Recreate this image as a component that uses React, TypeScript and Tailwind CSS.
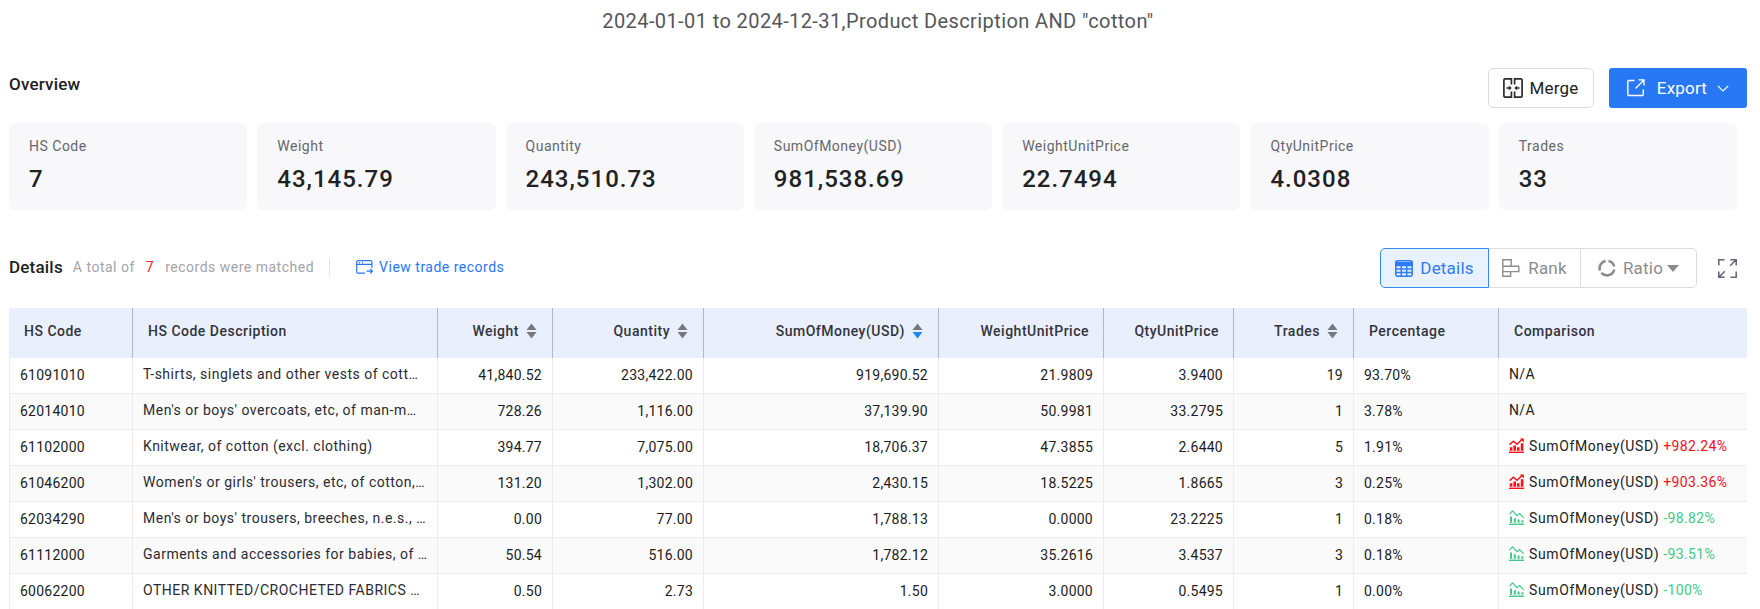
import React from "react";

const STATS = [
  { label: "HS Code", value: "7" },
  { label: "Weight", value: "43,145.79" },
  { label: "Quantity", value: "243,510.73" },
  { label: "SumOfMoney(USD)", value: "981,538.69" },
  { label: "WeightUnitPrice", value: "22.7494" },
  { label: "QtyUnitPrice", value: "4.0308" },
  { label: "Trades", value: "33" },
];

const ROWS = [
  { code: "61091010", desc: "T-shirts, singlets and other vests of cott…", weight: "41,840.52", qty: "233,422.00", sum: "919,690.52", wup: "21.9809", qup: "3.9400", trades: "19", pct: "93.70%", change: "" },
  { code: "62014010", desc: "Men's or boys' overcoats, etc, of man-m…", weight: "728.26", qty: "1,116.00", sum: "37,139.90", wup: "50.9981", qup: "33.2795", trades: "1", pct: "3.78%", change: "" },
  { code: "61102000", desc: "Knitwear, of cotton (excl. clothing)", weight: "394.77", qty: "7,075.00", sum: "18,706.37", wup: "47.3855", qup: "2.6440", trades: "5", pct: "1.91%", change: "+982.24%" },
  { code: "61046200", desc: "Women's or girls' trousers, etc, of cotton,…", weight: "131.20", qty: "1,302.00", sum: "2,430.15", wup: "18.5225", qup: "1.8665", trades: "3", pct: "0.25%", change: "+903.36%" },
  { code: "62034290", desc: "Men's or boys' trousers, breeches, n.e.s., …", weight: "0.00", qty: "77.00", sum: "1,788.13", wup: "0.0000", qup: "23.2225", trades: "1", pct: "0.18%", change: "-98.82%" },
  { code: "61112000", desc: "Garments and accessories for babies, of …", weight: "50.54", qty: "516.00", sum: "1,782.12", wup: "35.2616", qup: "3.4537", trades: "3", pct: "0.18%", change: "-93.51%" },
  { code: "60062200", desc: "OTHER KNITTED/CROCHETED FABRICS …", weight: "0.50", qty: "2.73", sum: "1.50", wup: "3.0000", qup: "0.5495", trades: "1", pct: "0.00%", change: "-100%" },
];

function SortIcon({ active }: { active?: boolean }) {
  return (
    <svg width="11" height="16" viewBox="0 0 11 16" className="shrink-0">
      <path d="M5.5 0.5L10.5 7H0.5Z" fill="#77787f" />
      <path d="M5.5 15.5L10.5 9H0.5Z" fill={active ? "#1e88f5" : "#77787f"} />
    </svg>
  );
}

function MergeIcon() {
  return (
    <svg width="20" height="20" viewBox="0 0 20 20" fill="none" stroke="#2b2c32" strokeWidth="1.7">
      <path d="M8.4 6.5V.9H2.1A1.2 1.2 0 0 0 .9 2.1v15.8a1.2 1.2 0 0 0 1.2 1.2h6.3v-5.6" />
      <path d="M11.6 6.5V.9h6.3a1.2 1.2 0 0 1 1.2 1.2v15.8a1.2 1.2 0 0 1-1.2 1.2h-6.3v-5.6" />
      <path d="M3.4 10h3.2M16.6 10h-3.2" strokeWidth="1.4" />
      <path d="M5.8 7.4L8.8 10L5.8 12.6ZM14.2 7.4L11.2 10L14.2 12.6Z" fill="#2b2c32" stroke="none" />
    </svg>
  );
}

function ExportIcon() {
  return (
    <svg width="18" height="18" viewBox="0 0 18 18" fill="none" stroke="#fff" strokeWidth="1.4">
      <path d="M7.5 1.5H2A1.2 1.2 0 0 0 .8 2.7v12.6A1.2 1.2 0 0 0 2 16.5h13.1a1.2 1.2 0 0 0 1.2-1.2V10.5" />
      <path d="M11.5.9h5.5v5.5M17 .9L8.5 9.4" />
    </svg>
  );
}

function TradeIcon() {
  return (
    <svg width="17" height="14" viewBox="0 0 17 14" fill="none" stroke="#2878f6" strokeWidth="1.2" className="shrink-0">
      <path d="M9 13.2H2A1.3 1.3 0 0 1 .7 12V2A1.3 1.3 0 0 1 2 .7h12.6A1.3 1.3 0 0 1 15.9 2v6" />
      <path d="M.7 4.4h15.2M3 2.6h1M6 2.6h1" />
      <path d="M10.5 11.2h5.8M14.2 9l2.2 2.2-2.2 2.2" />
    </svg>
  );
}

function TableIcon() {
  return (
    <svg width="18" height="17" viewBox="0 0 18 17" fill="none" stroke="#2e7bf6" strokeWidth="1.5">
      <rect x=".8" y=".8" width="16.4" height="15.4" rx="2" />
      <path d="M.8 2.8h16.4V5.4H.8Z" fill="#2e7bf6" />
      <path d="M.8 9h16.4M.8 12.6h16.4M6.3 5v11M11.7 5v11" />
    </svg>
  );
}

function RankIcon() {
  return (
    <svg width="18" height="18" viewBox="0 0 18 18" fill="none" stroke="#8c8c8c" strokeWidth="1.4">
      <path d="M.8.8h8.4v6.4H.8ZM.8 7.2h16v5.4H.8ZM.8 12.6h7.8v4.6H.8Z" />
    </svg>
  );
}

function RatioIcon() {
  return (
    <svg width="18" height="18" viewBox="0 0 18 18" fill="none" stroke="#8c8c8c" strokeWidth="2.6">
      <path d="M10.5 1.9A7.4 7.4 0 0 1 16.2 7.6" />
      <path d="M16.2 10.4A7.4 7.4 0 0 1 3.4 13.8" />
      <path d="M2 11.5A7.4 7.4 0 0 1 7.6 1.9" />
    </svg>
  );
}

function FullscreenIcon() {
  return (
    <svg width="19" height="19" viewBox="0 0 19 19" fill="none" stroke="#62627a" strokeWidth="1.5">
      <path d="M.8 6.5V.8h5.7M12.5.8h5.7v5.7M18.2.8l-6 6M.8 12.5v5.7h5.7M.8 18.2l6-6M18.2 12.5v5.7h-5.7" />
    </svg>
  );
}

function TrendIcon({ up }: { up: boolean }) {
  const color = up ? "#f5101a" : "#42c98a";
  return (
    <svg width="15" height="15" viewBox="0 0 15 15" fill="none" className="shrink-0">
      <path d="M0 14.3h15" stroke={color} strokeWidth="1.4" />
      {up ? (
        <>
          <path d="M.8 12.8V9.2h2.6v3.6ZM4.4 12.8V7.6h2.6v5.2ZM8 12.8V9.2h2.6v3.6ZM11.8 12.8V5.2h2.6v7.6Z" fill={color} />
          <path d="M.5 6.6L4.5 3.2L8 6.2L13 1.6" stroke={color} strokeWidth="1.4" />
          <path d="M10.8 .4h4v4Z" fill={color} />
        </>
      ) : (
        <>
          <path d="M1 12.8V6.6h2v6.2ZM4.8 12.8V8.2h2v4.6ZM8.6 12.8V9.4h2v3.4ZM12.4 12.8V10.2h2v2.6Z" fill={color} />
          <path d="M.5 4.2L3.5 .9L8 5.6L10.5 3.6L14.6 7.6" stroke={color} strokeWidth="1.2" />
        </>
      )}
    </svg>
  );
}

function HeadCell({
  label,
  width,
  sort,
  active,
  right,
  pad,
}: {
  label: string;
  width: string;
  sort?: boolean;
  active?: boolean;
  right?: boolean;
  pad: string;
}) {
  return (
    <th className={`${width} ${pad} h-[50px] border-l border-[#b3b6c9] first:border-l-0 bg-[#e9effd] pb-1 font-medium text-[#33343c] whitespace-nowrap`}>
      <div className={`flex items-center gap-[7px] ${right ? "justify-end" : "justify-start"}`}>
        {label}
        {sort && <SortIcon active={active} />}
      </div>
    </th>
  );
}

function Comparison({ change }: { change: string }) {
  if (!change) return <span className="text-[#222]">N/A</span>;
  const up = change.startsWith("+");
  return (
    <div className="flex items-center whitespace-nowrap">
      <TrendIcon up={up} />
      <span className="ml-[5px] tracking-[0.62px] text-[#222]">SumOfMoney(USD)</span>
      <span className={`ml-1 ${up ? "text-[#f5101a]" : "text-[#42c98a]"}`}>{change}</span>
    </div>
  );
}

export default function App() {
  return (
    <div className="h-[609px] w-[1760px] overflow-hidden bg-white pl-[9px] pr-[13px] font-['Roboto',sans-serif] text-sm tracking-[0.5px] text-[#222]">
      <h1 className="flex h-[42px] items-center justify-center text-xl font-normal tracking-[0.4px] text-[#55565c]">
        2024-01-01 to 2024-12-31,Product Description AND "cotton"
      </h1>

      <div className="mt-[26px] flex h-10 items-center justify-between">
        <h2 className="-mt-[8px] text-[17px] font-medium tracking-[0.2px] text-[#222]">Overview</h2>
        <div className="flex gap-[15px] text-[17px] tracking-[0.2px]">
          <button className="flex h-10 w-[106px] items-center justify-center gap-[6px] rounded-[5px] border border-[#dcdcdc] bg-white text-[#222]">
            <MergeIcon />
            Merge
          </button>
          <button className="flex h-10 w-[138px] items-center justify-center rounded-[3px] bg-[#2878f6] text-white">
            <ExportIcon />
            <span className="ml-3">Export</span>
            <svg width="12" height="7" viewBox="0 0 12 7" fill="none" stroke="#fff" strokeWidth="1.2" className="ml-[10px]">
              <path d="M.8.8L6 6L11.2.8" />
            </svg>
          </button>
        </div>
      </div>

      <div className="mt-[15px] mr-[10px] grid grid-cols-7 gap-[10px]">
        {STATS.map((s) => (
          <div key={s.label} className="h-[87px] rounded-md bg-[#f8f8fa] pl-5 pt-[14px]">
            <div className="leading-[18px] text-[#66676c]">{s.label}</div>
            <div className="mt-3 text-2xl leading-6 font-medium tracking-[1px] text-[#222]">{s.value}</div>
          </div>
        ))}
      </div>

      <div className="mt-[38px] flex h-10 items-center">
        <div className="-mt-[2px] flex items-center">
          <h2 className="text-[17px] font-medium tracking-[0.2px] text-[#222]">Details</h2>
          <span className="ml-[10px] text-[#a3a3a8]">A total of</span>
          <span className="ml-[11px] text-[#f5222d]">7</span>
          <span className="ml-[11px] text-[#a3a3a8]">records were matched</span>
          <span className="ml-[15px] h-[18px] w-px bg-[#e4e4e4]" />
          <a className="ml-[26px] flex items-center gap-[6px] text-[#2878f6]">
            <TradeIcon />
            View trade records
          </a>
        </div>
        <div className="ml-auto flex items-center">
          <div className="flex h-10 items-stretch text-[17px] tracking-[0.2px]">
            <div className="flex w-[109px] items-center justify-center gap-[7px] rounded-l-[5px] border border-[#2d8cf5] bg-[#e9f1fe] text-[#2e7bf6]">
              <TableIcon />
              Details
            </div>
            <div className="flex w-[92px] items-center justify-center gap-2 border-y border-r border-[#dcdcdc] text-[#8c8c8c]">
              <RankIcon />
              Rank
            </div>
            <div className="flex w-[116px] items-center justify-center gap-[7px] rounded-r-[5px] border-y border-r border-[#dcdcdc] text-[#8c8c8c]">
              <RatioIcon />
              <span className="flex items-center gap-1">
                Ratio
                <svg width="12" height="7" viewBox="0 0 12 7">
                  <path d="M0 0H12L6 7Z" fill="#8c8c8c" />
                </svg>
              </span>
            </div>
          </div>
          <button className="mr-[10px] ml-[21px]">
            <FullscreenIcon />
          </button>
        </div>
      </div>

      <table className="mt-5 w-[1738px] table-fixed border-separate border-spacing-0 text-left">
        <thead>
          <tr>
            <HeadCell label="HS Code" width="w-[123px]" pad="pl-[15px]" />
            <HeadCell label="HS Code Description" width="w-[305px]" pad="pl-[15px]" />
            <HeadCell label="Weight" width="w-[115px]" pad="pr-[15px]" sort right />
            <HeadCell label="Quantity" width="w-[151px]" pad="pr-[15px]" sort right />
            <HeadCell label="SumOfMoney(USD)" width="w-[235px]" pad="pr-[15px]" sort active right />
            <HeadCell label="WeightUnitPrice" width="w-[165px]" pad="pr-[14px]" right />
            <HeadCell label="QtyUnitPrice" width="w-[130px]" pad="pr-[14px]" right />
            <HeadCell label="Trades" width="w-[120px]" pad="pr-[15px]" sort right />
            <HeadCell label="Percentage" width="w-[145px]" pad="pl-[15px]" />
            <HeadCell label="Comparison" width="w-[249px]" pad="pl-[15px]" />
          </tr>
        </thead>
        <tbody>
          {ROWS.map((r) => (
            <tr key={r.code} className="h-9 tracking-[0.25px] even:bg-[#fafafa] [&>td]:border-b [&>td]:border-l [&>td]:border-[#ececec] [&>td]:pb-[2px] text-[#1c1c22]">
              <td className="pl-[10px]">{r.code}</td>
              <td className="whitespace-nowrap pl-[10px] tracking-[0.5px] text-[#2b2b33]">
                <span className="block -translate-y-px">{r.desc}</span>
              </td>
              <td className="pr-[10px] text-right">{r.weight}</td>
              <td className="pr-[10px] text-right">{r.qty}</td>
              <td className="pr-[10px] text-right">{r.sum}</td>
              <td className="pr-[10px] text-right">{r.wup}</td>
              <td className="pr-[10px] text-right">{r.qup}</td>
              <td className="pr-[10px] text-right">{r.trades}</td>
              <td className="pl-[10px]">{r.pct}</td>
              <td className="pl-[10px] tracking-[0.35px]">
                <div className="-translate-y-px">
                  <Comparison change={r.change} />
                </div>
              </td>
            </tr>
          ))}
        </tbody>
      </table>
    </div>
  );
}
